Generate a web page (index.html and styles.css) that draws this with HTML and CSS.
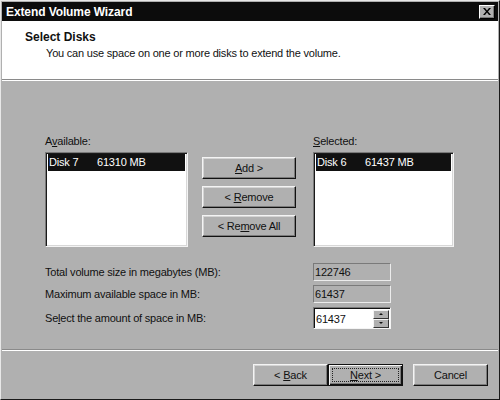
FILE: index.html
```html
<!DOCTYPE html>
<html lang="en">
<head>
  <meta charset="UTF-8">
  <title>Extend Volume Wizard</title>
  <link rel="stylesheet" href="styles.css">
</head>
<body>
  <div class="window">
    <!-- Title bar -->
    <div class="titlebar">
      <span class="title">Extend Volume Wizard</span>
      <button class="close-btn" aria-label="Close">
        <svg width="8" height="7" viewBox="0 0 8 7">
          <path d="M0 0 L2 0 L4 2.5 L6 0 L8 0 L5 3.5 L8 7 L6 7 L4 4.5 L2 7 L0 7 L3 3.5 Z" fill="#000"/>
        </svg>
      </button>
    </div>

    <!-- Wizard header -->
    <div class="header">
      <div class="header-title">Select Disks</div>
      <div class="header-sub">You can use space on one or more disks to extend the volume.</div>
    </div>

    <div class="body">
      <div class="content">
        <div class="picker">
          <div class="list-col">
            <div class="label">A<u>v</u>ailable:</div>
            <div class="listbox wide">
              <div class="list-row selected"><span class="disk">Disk 7</span><span>61310 MB</span></div>
            </div>
          </div>

          <div class="button-col">
            <button class="btn"><u>A</u>dd &gt;</button>
            <button class="btn">&lt; <u>R</u>emove</button>
            <button class="btn">&lt; Re<u>m</u>ove All</button>
          </div>

          <div class="list-col">
            <div class="label"><u>S</u>elected:</div>
            <div class="listbox">
              <div class="list-row selected"><span class="disk">Disk 6</span><span>61437 MB</span></div>
            </div>
          </div>
        </div>

        <div class="fields">
          <div class="field-row">
            <span class="field-label">Total volume size in megabytes (MB):</span>
            <span class="readonly">122746</span>
          </div>
          <div class="field-row">
            <span class="field-label">Maximum available space in MB:</span>
            <span class="readonly">61437</span>
          </div>
          <div class="field-row spin-row">
            <span class="field-label">Se<u>l</u>ect the amount of space in MB:</span>
            <span class="spinbox">
              <span class="spin-value">61437</span>
              <span class="spin-buttons">
                <span class="spin-btn"><span class="arrow up"></span></span>
                <span class="spin-btn"><span class="arrow down"></span></span>
              </span>
            </span>
          </div>
        </div>
      </div>

      <!-- Wizard buttons -->
      <div class="footer">
        <button class="btn nav back">&lt; <u>B</u>ack</button>
        <button class="btn nav default"><span class="focus"><u>N</u>ext &gt;</span></button>
        <button class="btn nav cancel">Cancel</button>
      </div>
    </div>
  </div>
</body>
</html>
```

FILE: styles.css
```css
/* Base */
body {
  margin: 0;
  background: #b0b0b0;
  font-family: 'Liberation Sans', Arial, sans-serif;
  font-size: 11px;
  letter-spacing: -0.2px;
  color: #111;
}

u {
  text-decoration: underline;
  text-underline-offset: 1px;
}

.window {
  width: 500px;
  height: 400px;
  box-sizing: border-box;
  border: 1px solid;
  border-color: #e8e8e8 #1a1a1a #1a1a1a #e8e8e8;
  padding: 1px;
  display: flex;
  flex-direction: column;
  background: #b0b0b0;
}

/* Title bar */
.titlebar {
  height: 19px;
  flex-shrink: 0;
  background: #0c0c0c;
  display: flex;
  align-items: center;
  justify-content: space-between;
  padding: 0 3px 0 4px;
}

.title {
  color: #fff;
  font-weight: bold;
  font-size: 12px;
  letter-spacing: -0.1px;
}

.close-btn {
  width: 16px;
  height: 14px;
  padding: 0;
  background: #b0b0b0;
  border: 1px solid;
  border-color: #fff #000 #000 #fff;
  box-shadow: inset -1px -1px #7a7a7a;
  display: flex;
  align-items: center;
  justify-content: center;
}

/* Header */
.header {
  height: 59px;
  flex-shrink: 0;
  box-sizing: border-box;
  background: #fff;
  padding: 9px 0 0 23px;
  border-bottom: 1px solid #8a8a8a;
}

.header-title {
  font-weight: bold;
  font-size: 12px;
  letter-spacing: 0;
  line-height: 14px;
}

.header-sub {
  line-height: 14px;
  margin-top: 2px;
  padding-left: 21px;
}

/* Body */
.body {
  flex: 1;
  display: flex;
  flex-direction: column;
  box-shadow: inset 0 1px #fff;
}

.content {
  flex: 1;
  padding: 54px 0 0 43px;
}

.picker {
  display: flex;
}

.list-col {
  display: flex;
  flex-direction: column;
}

.label {
  line-height: 14px;
  margin-bottom: 4px;
}

.listbox {
  width: 141px;
  height: 95px;
  box-sizing: border-box;
  background: #fff;
  border: 1px solid;
  border-color: #7a7a7a #f4f4f4 #f4f4f4 #7a7a7a;
  box-shadow: inset 1px 1px #1a1a1a, inset -1px -1px #d8d8d8;
  padding: 1px 2px;
}

.listbox.wide {
  width: 143px;
}

.list-row {
  height: 17px;
  line-height: 17px;
  padding-left: 1px;
  display: flex;
}

.list-row.selected {
  background: #111;
  color: #fff;
}

.disk {
  width: 48px;
}

.button-col {
  display: flex;
  flex-direction: column;
  gap: 7px;
  padding-top: 23px;
  margin: 0 17px 0 14px;
}

/* Buttons */
.btn {
  width: 94px;
  height: 22px;
  padding: 0;
  font-family: inherit;
  font-size: 11px;
  letter-spacing: -0.2px;
  color: #111;
  background: #b0b0b0;
  border: 1px solid;
  border-color: #f4f4f4 #111 #111 #f4f4f4;
  box-shadow: inset -1px -1px #7a7a7a, inset 1px 1px #d4d4d4;
}

/* Fields */
.fields {
  margin-top: 16px;
  width: 346px;
}

.field-row {
  display: flex;
  align-items: center;
  justify-content: space-between;
  height: 18px;
  margin-bottom: 4px;
}

.spin-row {
  height: 22px;
  margin-top: 1px;
}

.readonly {
  width: 78px;
  height: 18px;
  box-sizing: border-box;
  border: 1px solid;
  border-color: #7a7a7a #ececec #ececec #7a7a7a;
  line-height: 16px;
  padding-left: 1px;
}

.spinbox {
  width: 78px;
  height: 22px;
  box-sizing: border-box;
  background: #fff;
  border: 1px solid;
  border-color: #7a7a7a #f4f4f4 #f4f4f4 #7a7a7a;
  box-shadow: inset 1px 1px #111;
  display: flex;
  align-items: center;
  justify-content: space-between;
  padding: 1px 1px 0 2px;
}

.spin-value {
  line-height: 18px;
}

.spin-buttons {
  display: flex;
  flex-direction: column;
  width: 16px;
  height: 18px;
}

.spin-btn {
  flex: 1;
  background: #b0b0b0;
  border: 1px solid;
  border-color: #f4f4f4 #333 #333 #f4f4f4;
  display: flex;
  align-items: center;
  justify-content: center;
}

.arrow {
  width: 0;
  height: 0;
  border-left: 2px solid transparent;
  border-right: 2px solid transparent;
}

.arrow.up {
  border-bottom: 2px solid #111;
}

.arrow.down {
  border-top: 2px solid #111;
}

/* Footer */
.footer {
  height: 49px;
  flex-shrink: 0;
  box-sizing: border-box;
  border-top: 1px solid #8a8a8a;
  box-shadow: inset 0 1px #fff;
  display: flex;
  justify-content: flex-end;
  align-items: flex-start;
  padding: 14px 10px 0 0;
}

.btn.nav {
  width: 75px;
}

.btn.default {
  border-color: #111;
  box-shadow: inset 1px 1px #f4f4f4, inset -1px -1px #111, inset -2px -2px #7a7a7a;
  padding: 3px;
}

.focus {
  display: block;
  height: 100%;
  box-sizing: border-box;
  border: 1px dotted #222;
  line-height: 12px;
}

.btn.cancel {
  margin-left: 10px;
}
```
